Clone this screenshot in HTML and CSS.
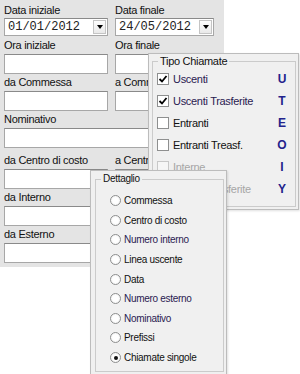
FILE: index.html
```html
<!DOCTYPE html>
<html lang="it">
<head>
  <meta charset="UTF-8">
  <title>Filtri chiamate</title>
  <link rel="stylesheet" href="styles.css">
</head>
<body>
  <div class="filters">
    <div class="group-date">
      <span class="field-label">Data iniziale</span>
      <div class="text-box date-box"><span>01/01/2012</span><span class="date-btn"></span></div>
    </div>
    <div class="group-date">
      <span class="field-label">Data finale</span>
      <div class="text-box date-box"><span>24/05/2012</span><span class="date-btn"></span></div>
    </div>

    <div class="field-group first-row">
      <span class="field-label">Ora iniziale</span>
      <div class="text-box"></div>
    </div>
    <div class="field-group first-row">
      <span class="field-label">Ora finale</span>
      <div class="text-box"></div>
    </div>

    <div class="field-group">
      <span class="field-label">da Commessa</span>
      <div class="text-box"></div>
    </div>
    <div class="field-group">
      <span class="field-label">a Commessa</span>
      <div class="text-box"></div>
    </div>

    <div class="field-group wide">
      <span class="field-label">Nominativo</span>
      <div class="text-box"></div>
    </div>

    <div class="field-group spaced">
      <span class="field-label">da Centro di costo</span>
      <div class="text-box"></div>
    </div>
    <div class="field-group spaced">
      <span class="field-label">a Centro di costo</span>
      <div class="text-box"></div>
    </div>

    <div class="field-group">
      <span class="field-label">da Interno</span>
      <div class="text-box"></div>
    </div>
    <div class="field-group">
      <span class="field-label">a Interno</span>
      <div class="text-box"></div>
    </div>

    <div class="field-group">
      <span class="field-label">da Esterno</span>
      <div class="text-box"></div>
    </div>
    <div class="field-group">
      <span class="field-label">a Esterno</span>
      <div class="text-box"></div>
    </div>
  </div>

  <!-- Tipo chiamate popup -->
  <div class="popup popup-tipo">
    <fieldset class="group group-tipo">
      <legend>Tipo Chiamate</legend>
      <div class="check-row tint">
        <span class="check is-on"><svg width="10" height="10" viewBox="0 0 10 10"><path d="M1.5 5 L4 7.5 L8.5 2" fill="none" stroke="#000" stroke-width="1.8"/></svg></span>
        <span>Uscenti</span><span class="hotkey">U</span>
      </div>
      <div class="check-row tint">
        <span class="check is-on"><svg width="10" height="10" viewBox="0 0 10 10"><path d="M1.5 5 L4 7.5 L8.5 2" fill="none" stroke="#000" stroke-width="1.8"/></svg></span>
        <span>Uscenti Trasferite</span><span class="hotkey">T</span>
      </div>
      <div class="check-row">
        <span class="check"></span>
        <span>Entranti</span><span class="hotkey">E</span>
      </div>
      <div class="check-row">
        <span class="check"></span>
        <span>Entranti Treasf.</span><span class="hotkey">O</span>
      </div>
      <div class="check-row is-disabled">
        <span class="check"></span>
        <span>Interne</span><span class="hotkey">I</span>
      </div>
      <div class="check-row is-disabled">
        <span class="check"></span>
        <span>Interne Trasferite</span><span class="hotkey">Y</span>
      </div>
    </fieldset>
  </div>

  <!-- Dettaglio popup -->
  <div class="popup popup-detail">
    <fieldset class="group group-detail">
      <legend>Dettaglio</legend>
      <div class="radio-row"><span class="radio"></span><span>Commessa</span></div>
      <div class="radio-row"><span class="radio"></span><span>Centro di costo</span></div>
      <div class="radio-row tint"><span class="radio"></span><span>Numero interno</span></div>
      <div class="radio-row"><span class="radio"></span><span>Linea uscente</span></div>
      <div class="radio-row"><span class="radio"></span><span>Data</span></div>
      <div class="radio-row tint"><span class="radio"></span><span>Numero esterno</span></div>
      <div class="radio-row tint"><span class="radio"></span><span>Nominativo</span></div>
      <div class="radio-row"><span class="radio"></span><span>Prefissi</span></div>
      <div class="radio-row"><span class="radio is-on"></span><span>Chiamate singole</span></div>
    </fieldset>
  </div>
</body>
</html>
```

FILE: styles.css
```css
* {
  box-sizing: border-box;
}

body {
  margin: 0;
  width: 300px;
  height: 374px;
  overflow: hidden;
  position: relative;
  background: #fff;
  font-family: "Liberation Sans", Arial, sans-serif;
  font-size: 11px;
  letter-spacing: -0.3px;
  color: #111;
}

/* Base form */
.filters {
  width: 224px;
  height: 267px;
  background: #e4e4e4;
  padding: 2px 0 0 4px;
  display: grid;
  grid-template-columns: 104px 99px;
  column-gap: 7px;
  align-content: start;
}

.field-label {
  display: block;
  height: 17px;
  line-height: 17px;
  white-space: nowrap;
}

.group-date .field-label {
  height: 16px;
  line-height: 16px;
}

.first-row {
  margin-top: 1px;
}

.spaced {
  margin-top: 4px;
}

.wide {
  grid-column: 1 / -1;
}

.text-box {
  height: 20px;
  background: #fff;
  border: 1px solid #a7a7a7;
  border-top-color: #8a8a8a;
}

.date-box {
  height: 18px;
  display: flex;
  align-items: center;
  padding-left: 3px;
  font-family: "Liberation Mono", "Courier New", monospace;
  font-size: 12px;
  letter-spacing: 0;
  color: #222;
}

.date-btn {
  margin-left: auto;
  margin-right: 1px;
  width: 13px;
  height: 14px;
  border: 1px solid #c4c4c4;
  background: linear-gradient(#fdfdfd, #e9e9e9);
  display: flex;
  align-items: center;
  justify-content: center;
}

.date-btn::after {
  content: "";
  border-left: 3.5px solid transparent;
  border-right: 3.5px solid transparent;
  border-top: 4px solid #000;
}

/* Popups */
.popup {
  position: absolute;
  background: #f0f0f0;
  border: 1px solid #bcbcbc;
  box-shadow: 1px 1px 2px rgba(0, 0, 0, 0.12);
}

.popup-tipo {
  left: 148px;
  top: 53px;
  width: 151px;
  height: 157px;
  z-index: 1;
}

.popup-detail {
  left: 90px;
  top: 170px;
  width: 137px;
  height: 210px;
  z-index: 2;
}

.group {
  margin: 0;
  padding: 0;
  min-width: 0;
  border: 1px solid #cbcbcb;
}

.group legend {
  margin-left: 5px;
  padding: 0 2px;
  line-height: 12px;
}

.group-tipo {
  margin: 1px 2px 0 3px;
  height: 152px;
  padding-top: 1px;
}

.group-detail {
  margin: 2px 2px 0 4px;
  height: 199px;
  padding-top: 6px;
  font-size: 10px;
}

.group-detail legend {
  font-size: 10px;
}

.check-row {
  display: flex;
  align-items: center;
  height: 22px;
  padding: 0 6px 0 4px;
  white-space: nowrap;
}

.check {
  width: 12px;
  height: 12px;
  margin-right: 4px;
  flex: none;
  border: 1px solid #8e8f8f;
  background: #fff;
  display: flex;
  align-items: center;
  justify-content: center;
}

.hotkey {
  margin-left: auto;
  width: 14px;
  text-align: center;
  font-weight: bold;
  font-size: 12px;
  letter-spacing: 0;
  color: #23238c;
}

.is-disabled {
  color: #a6a6a6;
}

.is-disabled .check {
  border-color: #c8c8c8;
  background: #f6f6f6;
}

.is-disabled .hotkey {
  color: #23238c;
}

.tint {
  color: #2a2050;
}

.radio-row {
  display: flex;
  align-items: center;
  height: 19.6px;
  padding-left: 14px;
  white-space: nowrap;
}

.radio {
  width: 11px;
  height: 11px;
  margin-right: 3px;
  flex: none;
  border: 1px solid #8e8f8f;
  border-radius: 50%;
  background: radial-gradient(#fff 40%, #ececec);
  display: flex;
  align-items: center;
  justify-content: center;
}

.radio.is-on::after {
  content: "";
  width: 4px;
  height: 4px;
  border-radius: 50%;
  background: #111;
}
```
